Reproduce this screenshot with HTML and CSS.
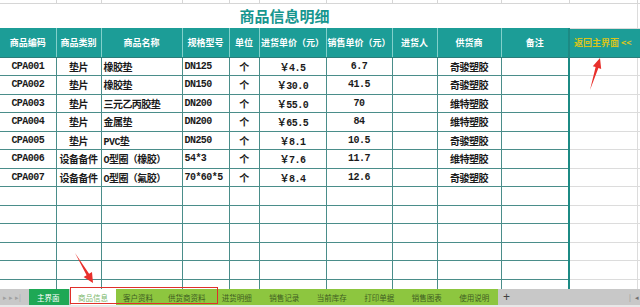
FILE: index.html
```html
<!DOCTYPE html>
<html lang="zh-CN">
<head>
<meta charset="utf-8">
<title>商品信息明细</title>
<link rel="stylesheet" href="styles.css">
</head>
<body>
<div class="page">
  <div class="sheet-wrap">
    <table class="sheet">
      <colgroup>
        <col class="w56"><col class="w45"><col class="w81"><col class="w47"><col class="w30"><col class="w67"><col class="w66"><col class="w45"><col class="w64"><col class="w68"><col class="w68"><col class="w3">
      </colgroup>
      <tr class="r-top"><td></td><td></td><td></td><td></td><td></td><td></td><td></td><td></td><td></td><td></td><td class="k-top"></td><td></td></tr>
      <tr class="r-title"><td colspan="10" class="title">商品信息明细</td><td class="k"></td><td class="x"></td></tr>
      <tr class="r-head">
        <th>商品编码</th><th>商品类别</th><th>商品名称</th><th>规格型号</th><th>单位</th><th>进货单价（元）</th><th>销售单价（元）</th><th>进货人</th><th>供货商</th><th>备注</th><th class="k-head">返回主界面 &lt;&lt;</th><th class="x-head"></th>
      </tr>
      <tr class="r-data"><td class="c">CPA001</td><td class="c">垫片</td><td class="l">橡胶垫</td><td class="l">DN125</td><td class="c">个</td><td class="c">￥4.5</td><td class="c">6.7</td><td></td><td class="c">奇骏塑胶</td><td></td><td class="k"></td><td class="x"></td></tr>
      <tr class="r-data"><td class="c">CPA002</td><td class="c">垫片</td><td class="l">橡胶垫</td><td class="l">DN150</td><td class="c">个</td><td class="c">￥30.0</td><td class="c">41.5</td><td></td><td class="c">奇骏塑胶</td><td></td><td class="k"></td><td class="x"></td></tr>
      <tr class="r-data"><td class="c">CPA003</td><td class="c">垫片</td><td class="l">三元乙丙胶垫</td><td class="l">DN200</td><td class="c">个</td><td class="c">￥55.0</td><td class="c">70</td><td></td><td class="c">维特塑胶</td><td></td><td class="k"></td><td class="x"></td></tr>
      <tr class="r-data"><td class="c">CPA004</td><td class="c">垫片</td><td class="l">金属垫</td><td class="l">DN200</td><td class="c">个</td><td class="c">￥65.5</td><td class="c">84</td><td></td><td class="c">维特塑胶</td><td></td><td class="k"></td><td class="x"></td></tr>
      <tr class="r-data"><td class="c">CPA005</td><td class="c">垫片</td><td class="l">PVC垫</td><td class="l">DN250</td><td class="c">个</td><td class="c">￥8.1</td><td class="c">10.5</td><td></td><td class="c">奇骏塑胶</td><td></td><td class="k"></td><td class="x"></td></tr>
      <tr class="r-data"><td class="c">CPA006</td><td class="c">设备备件</td><td class="l">O型圈（橡胶）</td><td class="l">54*3</td><td class="c">个</td><td class="c">￥7.6</td><td class="c">11.7</td><td></td><td class="c">维特塑胶</td><td></td><td class="k"></td><td class="x"></td></tr>
      <tr class="r-data"><td class="c">CPA007</td><td class="c">设备备件</td><td class="l">O型圈（氟胶）</td><td class="l">70*60*5</td><td class="c">个</td><td class="c">￥8.4</td><td class="c">12.6</td><td></td><td class="c">奇骏塑胶</td><td></td><td class="k"></td><td class="x"></td></tr>
      <tr class="r-data"><td></td><td></td><td></td><td></td><td></td><td></td><td></td><td></td><td></td><td></td><td class="k"></td><td class="x"></td></tr>
      <tr class="r-data"><td></td><td></td><td></td><td></td><td></td><td></td><td></td><td></td><td></td><td></td><td class="k"></td><td class="x"></td></tr>
      <tr class="r-data"><td></td><td></td><td></td><td></td><td></td><td></td><td></td><td></td><td></td><td></td><td class="k"></td><td class="x"></td></tr>
      <tr class="r-data"><td></td><td></td><td></td><td></td><td></td><td></td><td></td><td></td><td></td><td></td><td class="k"></td><td class="x"></td></tr>
      <tr class="r-data"><td></td><td></td><td></td><td></td><td></td><td></td><td></td><td></td><td></td><td></td><td class="k"></td><td class="x"></td></tr>
      <tr class="r-data"><td></td><td></td><td></td><td></td><td></td><td></td><td></td><td></td><td></td><td></td><td class="k"></td><td class="x"></td></tr>
    </table>
  </div>
  <div class="tabbar">
    <div class="nav"><span>▸</span><span>▸</span><span>▸|</span></div>
    <div class="tab main">主界面</div>
    <div class="tab active boxed">商品信息</div>
    <div class="tab boxed">客户资料</div>
    <div class="tab boxed">供货商资料</div>
    <div class="tab">进货明细</div>
    <div class="tab">销售记录</div>
    <div class="tab">当前库存</div>
    <div class="tab">打印单据</div>
    <div class="tab">销售图表</div>
    <div class="tab">使用说明</div>
    <div class="add">+</div>
    <div class="spacer"></div>
    <div class="rnav"><span class="bar">|</span><span>◂</span></div>
  </div>
  <div class="foot"></div>
  <div class="redbox"></div>
  <svg class="arrows" width="640" height="307" viewBox="0 0 640 307">
    <polygon points="590,90 598.4,68 601.2,69 600,58 592.8,66.2 595.6,67.1" fill="#e8302c"/>
    <polygon points="75,253 89.1,273.7 92,271.9 93,283 83.6,276.9 86.6,275.2" fill="#e8302c"/>
  </svg>
</div>
</body>
</html>
```

FILE: styles.css
```css
html, body {
  margin: 0;
  padding: 0;
  background: #ffffff;
}

.page {
  position: relative;
  width: 640px;
  height: 307px;
  overflow: hidden;
  display: flex;
  flex-direction: column;
  font-family: "Noto Sans CJK SC", "Liberation Sans", sans-serif;
}

.sheet-wrap {
  height: 289px;
  overflow: hidden;
  flex: none;
}

.sheet {
  table-layout: fixed;
  border-collapse: collapse;
  width: 640px;
}

.w56 { width: 56px; }
.w45 { width: 45px; }
.w81 { width: 81px; }
.w47 { width: 47px; }
.w30 { width: 30px; }
.w67 { width: 67px; }
.w66 { width: 66px; }
.w64 { width: 64px; }
.w68 { width: 68px; }
.w3 { width: 3px; }

.sheet td, .sheet th {
  padding: 0;
  white-space: nowrap;
  overflow: hidden;
  vertical-align: middle;
}

/* top partial row */
.r-top { height: 3px; }
.r-top td {
  border-right: 1px solid #d6d6d6;
  border-bottom: 1px solid #d6d6d6;
}

/* title row */
.r-title { height: 24px; }
.title {
  text-align: center;
  color: #17968f;
  font-weight: 700;
  font-size: 15px;
  line-height: 24px;
}

/* header row */
.r-head { height: 29px; }
.r-head th {
  background: #1c9d97;
  color: #ffffff;
  font-weight: 700;
  font-size: 9px;
  border-left: 1px solid #82d0cb;
  border-right: 1px solid #82d0cb;
  border-top: 1px solid #1c9d97;
  border-bottom: 1px solid #2b7e7a;
  text-align: center;
  letter-spacing: 0;
}
.r-head th:first-child { border-left: none; }
.r-head .k-head {
  color: #d8c41c;
  text-align: left;
  padding-left: 4px;
  border-left: 2px solid #1c8a84;
  border-right: none;
}
.r-head .x-head {
  border-left: none;
  border-right: none;
}

/* data rows */
.r-data { height: 18.5px; }
.r-data td {
  border: 1px solid #4a8d8a;
  color: #1a1a1a;
  font-family: "Liberation Mono", "Noto Sans CJK SC", monospace;
  font-weight: 700;
  font-size: 10px;
  letter-spacing: -0.55px;
}
.r-data td:first-child { border-left: none; }

.c { text-align: center; }
.l { text-align: left; padding-left: 2px !important; }

.sheet .k {
  border-left: 2px solid #1c8a84;
  border-right: 1px solid #dcdcdc;
  border-top: 1px solid #dcdcdc;
  border-bottom: 1px solid #dcdcdc;
}
.r-title .k {
  border-left: none;
}
.sheet .x {
  border: none;
  border-bottom: 1px solid #dcdcdc;
}

/* tab bar */
.tabbar {
  flex: none;
  height: 16px;
  background: #c8c8c8;
  display: flex;
  align-items: stretch;
  font-size: 7.5px;
}

.nav {
  width: 29px;
  display: flex;
  align-items: center;
  gap: 2px;
  padding-left: 3px;
  box-sizing: border-box;
  color: #a0a0a0;
  font-size: 7px;
}

.tab {
  background: #8dc63f;
  color: #3f5e22;
  padding: 0 8.75px;
  display: flex;
  align-items: center;
  white-space: nowrap;
}
.tab.boxed { padding: 0 7.5px; }
.tab.main {
  background: #1ea855;
  color: #ffffff;
  padding: 0 9px 0 8px;
  margin-right: 2px;
}
.tab.active {
  background: #ffffff;
  color: #7ab86a;
}

.add {
  width: 17px;
  display: flex;
  align-items: center;
  justify-content: center;
  color: #404040;
  font-size: 12px;
  font-family: "Liberation Sans", sans-serif;
}

.spacer { flex: 1; }

.rnav {
  display: flex;
  align-items: center;
  gap: 4px;
  padding-right: 1px;
  color: #707070;
  font-size: 7px;
}
.rnav .bar { color: #909090; }

.foot {
  flex: none;
  height: 2px;
  background: #e8e8e8;
}

.redbox {
  position: absolute;
  left: 70px;
  top: 287px;
  width: 148px;
  height: 17px;
  box-sizing: border-box;
  border: 1.5px solid #e0302a;
}

.arrows {
  position: absolute;
  left: 0;
  top: 0;
  pointer-events: none;
}
```
